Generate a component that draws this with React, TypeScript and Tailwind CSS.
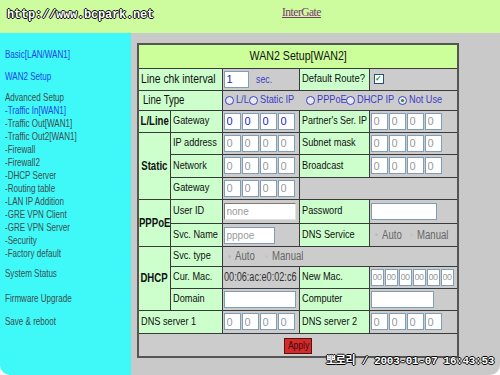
import React from "react";

const sans = "font-['Liberation_Sans',Arial,sans-serif]";

// Narrow text: the original page uses a condensed system font
const T = ({ children, s = "scale-x-[0.8]" }: { children: React.ReactNode; s?: string }) => (
  <span className={`inline-block origin-left whitespace-nowrap ${s}`}>{children}</span>
);

const Box = ({
  v = "0",
  w = "w-[17px]",
  blue = false,
  small = false,
}: {
  v?: string;
  w?: string;
  blue?: boolean;
  small?: boolean;
}) => (
  <input
    readOnly
    value={v}
    className={`${w} h-[17px] border border-[#7f9db9] bg-white leading-[15px] outline-none ${
      small ? "px-[1px] text-[9px] tracking-[-0.5px]" : "px-[2px] text-[11px]"
    } ${blue ? "text-[#2020d0]" : "text-[#999]"}`}
  />
);

const Ip4 = ({ blue = false }: { blue?: boolean }) => (
  <div className="flex gap-[1px]">
    <Box blue={blue} />
    <Box blue={blue} />
    <Box blue={blue} />
    <Box blue={blue} />
  </div>
);

const Radio = ({ label, on = false, w }: { label: string; on?: boolean; w: string }) => (
  <span className={`flex shrink-0 items-center gap-[2px] text-[#3c3cc8] ${w}`}>
    <span className="flex h-[9px] w-[9px] shrink-0 items-center justify-center rounded-full border border-[#3c3cc8] bg-[#e8e8f0]">
      {on && <span className="h-[3px] w-[3px] rounded-full bg-[#2a8a2a]" />}
    </span>
    <T>{label}</T>
  </span>
);

const OffRadios = () => (
  <div className="flex pl-[4px] text-[12px] text-[#666]">
    <span className="flex w-[37px] items-center gap-[4px]">
      <span className="h-[3px] w-[3px] rounded-full bg-[#bbb]" />
      <T>Auto</T>
    </span>
    <span className="flex items-center gap-[4px]">
      <span className="h-[3px] w-[3px] rounded-full bg-[#c4c4c4]" />
      <T>Manual</T>
    </span>
  </div>
);

const lab = "overflow-hidden border border-[#3a3a3a] bg-[#ccffcc] pl-[2px] text-[11.5px] text-[#111] whitespace-nowrap";
const val = "overflow-hidden border border-[#3a3a3a] bg-[#cccccc] px-[1px] text-[12px]";
const grp = "overflow-hidden border border-[#3a3a3a] bg-[#ccffcc] text-[12px] font-bold text-[#111]";

const Grp = ({ t }: { t: string }) => (
  <div className="flex justify-center">
    <span className="inline-block origin-center scale-x-[0.8] whitespace-nowrap">{t}</span>
  </div>
);

const subItems = [
  "-Traffic In[WAN1]",
  "-Traffic Out[WAN1]",
  "-Traffic Out2[WAN1]",
  "-Firewall",
  "-Firewall2",
  "-DHCP Server",
  "-Routing table",
  "-LAN IP Addition",
  "-GRE VPN Client",
  "-GRE VPN Server",
  "-Security",
  "-Factory default",
];

export default function App() {
  return (
    <div className={`relative h-[375px] w-[500px] overflow-hidden bg-white ${sans}`}>
      <div className="flex h-full flex-col overflow-hidden rounded-b-[10px]">
        <div className="flex h-[33px] shrink-0 bg-[#ccfc9e] pt-[4px]">
          <a className="ml-[282px] font-['Liberation_Serif',serif] text-[11.5px] tracking-[-0.5px] text-[#7a3670] underline">
            InterGate
          </a>
        </div>
        <div className="flex flex-1">
          <aside className="w-[131px] shrink-0 bg-[#3ff9f9] pl-[5px] pt-[15px] text-[11.5px] leading-[13px] text-[#3d4d4d]">
            <div className="origin-left scale-x-[0.7] whitespace-nowrap">
              <div className="text-[#1f46e6]">Basic[LAN/WAN1]</div>
              <div className="mt-[9px] text-[#1f46e6]">WAN2 Setup</div>
              <div className="mt-[8px]">Advanced Setup</div>
              {subItems.map((s, i) => (
                <div key={s} className={i === 0 ? "text-[#1f46e6]" : ""}>
                  {s}
                </div>
              ))}
              <div className="mt-[7px]">System Status</div>
              <div className="mt-[12px]">Firmware Upgrade</div>
              <div className="mt-[10px]">Save &amp; reboot</div>
            </div>
          </aside>
          <main className="flex-1 bg-[#c9c9c9] pl-[6px] pt-[10px]">
            <table className="w-[320px] table-fixed border-collapse border-2 border-[#555]">
              <colgroup>
                <col className="w-[32px]" />
                <col className="w-[52px]" />
                <col className="w-[77px]" />
                <col className="w-[70px]" />
                <col className="w-[89px]" />
              </colgroup>
              <tbody>
                <tr>
                  <td colSpan={5} className="h-[24px] border border-[#3a3a3a] bg-[#ccff99] text-center text-[12.5px] text-[#111]">
                    <span className="inline-block origin-center scale-x-[0.85]">WAN2 Setup[WAN2]</span>
                  </td>
                </tr>
                <tr>
                  <td colSpan={2} className={`${lab} h-[22px] text-[12px]`}>
                    <T s="scale-x-[0.86]">Line chk interval</T>
                  </td>
                  <td className={val}>
                    <div className="flex items-center gap-[7px]">
                      <Box v="1" w="w-[25px]" blue />
                      <span className="text-[11px] text-[#3c3cc8]">
                        <T>sec.</T>
                      </span>
                    </div>
                  </td>
                  <td className={lab}>
                    <T s="scale-x-[0.82]">Default Route?</T>
                  </td>
                  <td className={val}>
                    <span className="ml-[3px] flex h-[10px] w-[10px] items-center justify-center border border-[#1c5180] bg-white text-[8px] leading-none font-bold text-[#21a121]">
                      ✓
                    </span>
                  </td>
                </tr>
                <tr>
                  <td colSpan={2} className={`${lab} h-[20px] pl-[4px] text-[12px]`}>
                    <T>Line Type</T>
                  </td>
                  <td colSpan={3} className={val}>
                    <div className="flex pl-[1px] text-[11.5px]">
                      <Radio label="L/L" w="w-[24px]" />
                      <Radio label="Static IP" w="w-[57px]" />
                      <Radio label="PPPoE" w="w-[40px]" />
                      <Radio label="DHCP IP" w="w-[52px]" />
                      <Radio label="Not Use" on w="w-[44px]" />
                    </div>
                  </td>
                </tr>
                <tr>
                  <td className={`${grp} h-[22px]`}><Grp t="L/Line" /></td>
                  <td className={lab}><T>Gateway</T></td>
                  <td className={val}><Ip4 blue /></td>
                  <td className={lab}><T s="scale-x-[0.78]">Partner's Ser. IP</T></td>
                  <td className={val}><Ip4 /></td>
                </tr>
                <tr>
                  <td rowSpan={3} className={grp}><Grp t="Static" /></td>
                  <td className={`${lab} h-[22px]`}><T>IP address</T></td>
                  <td className={val}><Ip4 /></td>
                  <td className={lab}><T>Subnet mask</T></td>
                  <td className={val}><Ip4 /></td>
                </tr>
                <tr>
                  <td className={`${lab} h-[23px]`}><T>Network</T></td>
                  <td className={val}><Ip4 /></td>
                  <td className={lab}><T>Broadcast</T></td>
                  <td className={val}><Ip4 /></td>
                </tr>
                <tr>
                  <td className={`${lab} h-[22px]`}><T>Gateway</T></td>
                  <td className={val}><Ip4 /></td>
                  <td colSpan={2} className={val}></td>
                </tr>
                <tr>
                  <td rowSpan={2} className={grp}><Grp t="PPPoE" /></td>
                  <td className={`${lab} h-[24px]`}><T>User ID</T></td>
                  <td className={val}>
                    <input
                      readOnly
                      value="none"
                      className="h-[17px] w-[72px] border border-t-[#7a7a7a] border-l-[#7a7a7a] border-r-[#e0e0e0] border-b-[#e0e0e0] bg-white px-[2px] text-[10px] text-[#999] outline-none"
                    />
                  </td>
                  <td className={lab}><T>Password</T></td>
                  <td className={val}><Box v="" w="w-[66px]" /></td>
                </tr>
                <tr>
                  <td className={`${lab} h-[23px]`}><T>Svc. Name</T></td>
                  <td className={val}>
                    <input
                      readOnly
                      value="pppoe"
                      className="h-[17px] w-[51px] border border-[#7f9db9] bg-white px-[2px] text-[10px] text-[#999] outline-none"
                    />
                  </td>
                  <td className={lab}><T>DNS Service</T></td>
                  <td className={val}><OffRadios /></td>
                </tr>
                <tr>
                  <td rowSpan={3} className={grp}><Grp t="DHCP" /></td>
                  <td className={`${lab} h-[20px]`}><T>Svc. type</T></td>
                  <td colSpan={3} className={val}><OffRadios /></td>
                </tr>
                <tr>
                  <td className={`${lab} h-[22px]`}><T>Cur. Mac.</T></td>
                  <td className={`${val} text-[11px] text-[#333]`}>
                    <T s="scale-x-[0.76]">00:06:ac:e0:02:c6</T>
                  </td>
                  <td className={lab}><T>New Mac.</T></td>
                  <td className={val}>
                    <div className="flex gap-[1px]">
                      {[0, 1, 2, 3, 4, 5].map((i) => (
                        <Box key={i} v="00" w="w-[13px]" small />
                      ))}
                    </div>
                  </td>
                </tr>
                <tr>
                  <td className={`${lab} h-[22px]`}><T>Domain</T></td>
                  <td className={val}><Box v="" w="w-[72px]" /></td>
                  <td className={lab}><T>Computer</T></td>
                  <td className={val}><Box v="" w="w-[63px]" /></td>
                </tr>
                <tr>
                  <td colSpan={2} className={`${lab} h-[23px]`}><T>DNS server 1</T></td>
                  <td className={val}><Ip4 /></td>
                  <td className={lab}><T>DNS server 2</T></td>
                  <td className={val}><Ip4 /></td>
                </tr>
                <tr>
                  <td colSpan={5} className={`${val} h-[24px] text-center`}>
                    <button className="h-[16px] w-[28px] border border-[#5a1010] bg-[#d42a2a] text-[10px] leading-none text-[#3a0a0a]">
                      <span className="inline-block scale-x-[0.85]">Apply</span>
                    </button>
                  </td>
                </tr>
              </tbody>
            </table>
          </main>
        </div>
      </div>
      <div className="absolute left-[7px] top-[6px] font-['Liberation_Mono',monospace] text-[12px] font-bold tracking-[-0.2px] text-white [text-shadow:1px_0_0_#000,-1px_0_0_#000,0_1px_0_#000,0_-1px_0_#000]">
        http://www.bcpark.net
      </div>
      <div className="absolute bottom-[6px] right-[6px] font-['Liberation_Mono','Noto_Sans_CJK_KR',monospace] text-[11px] font-bold tracking-[-0.3px] text-white [text-shadow:1px_0_0_#000,-1px_0_0_#000,0_1px_0_#000,0_-1px_0_#000]">
        뽀로리 / 2003-01-07 16:43:53
      </div>
    </div>
  );
}
